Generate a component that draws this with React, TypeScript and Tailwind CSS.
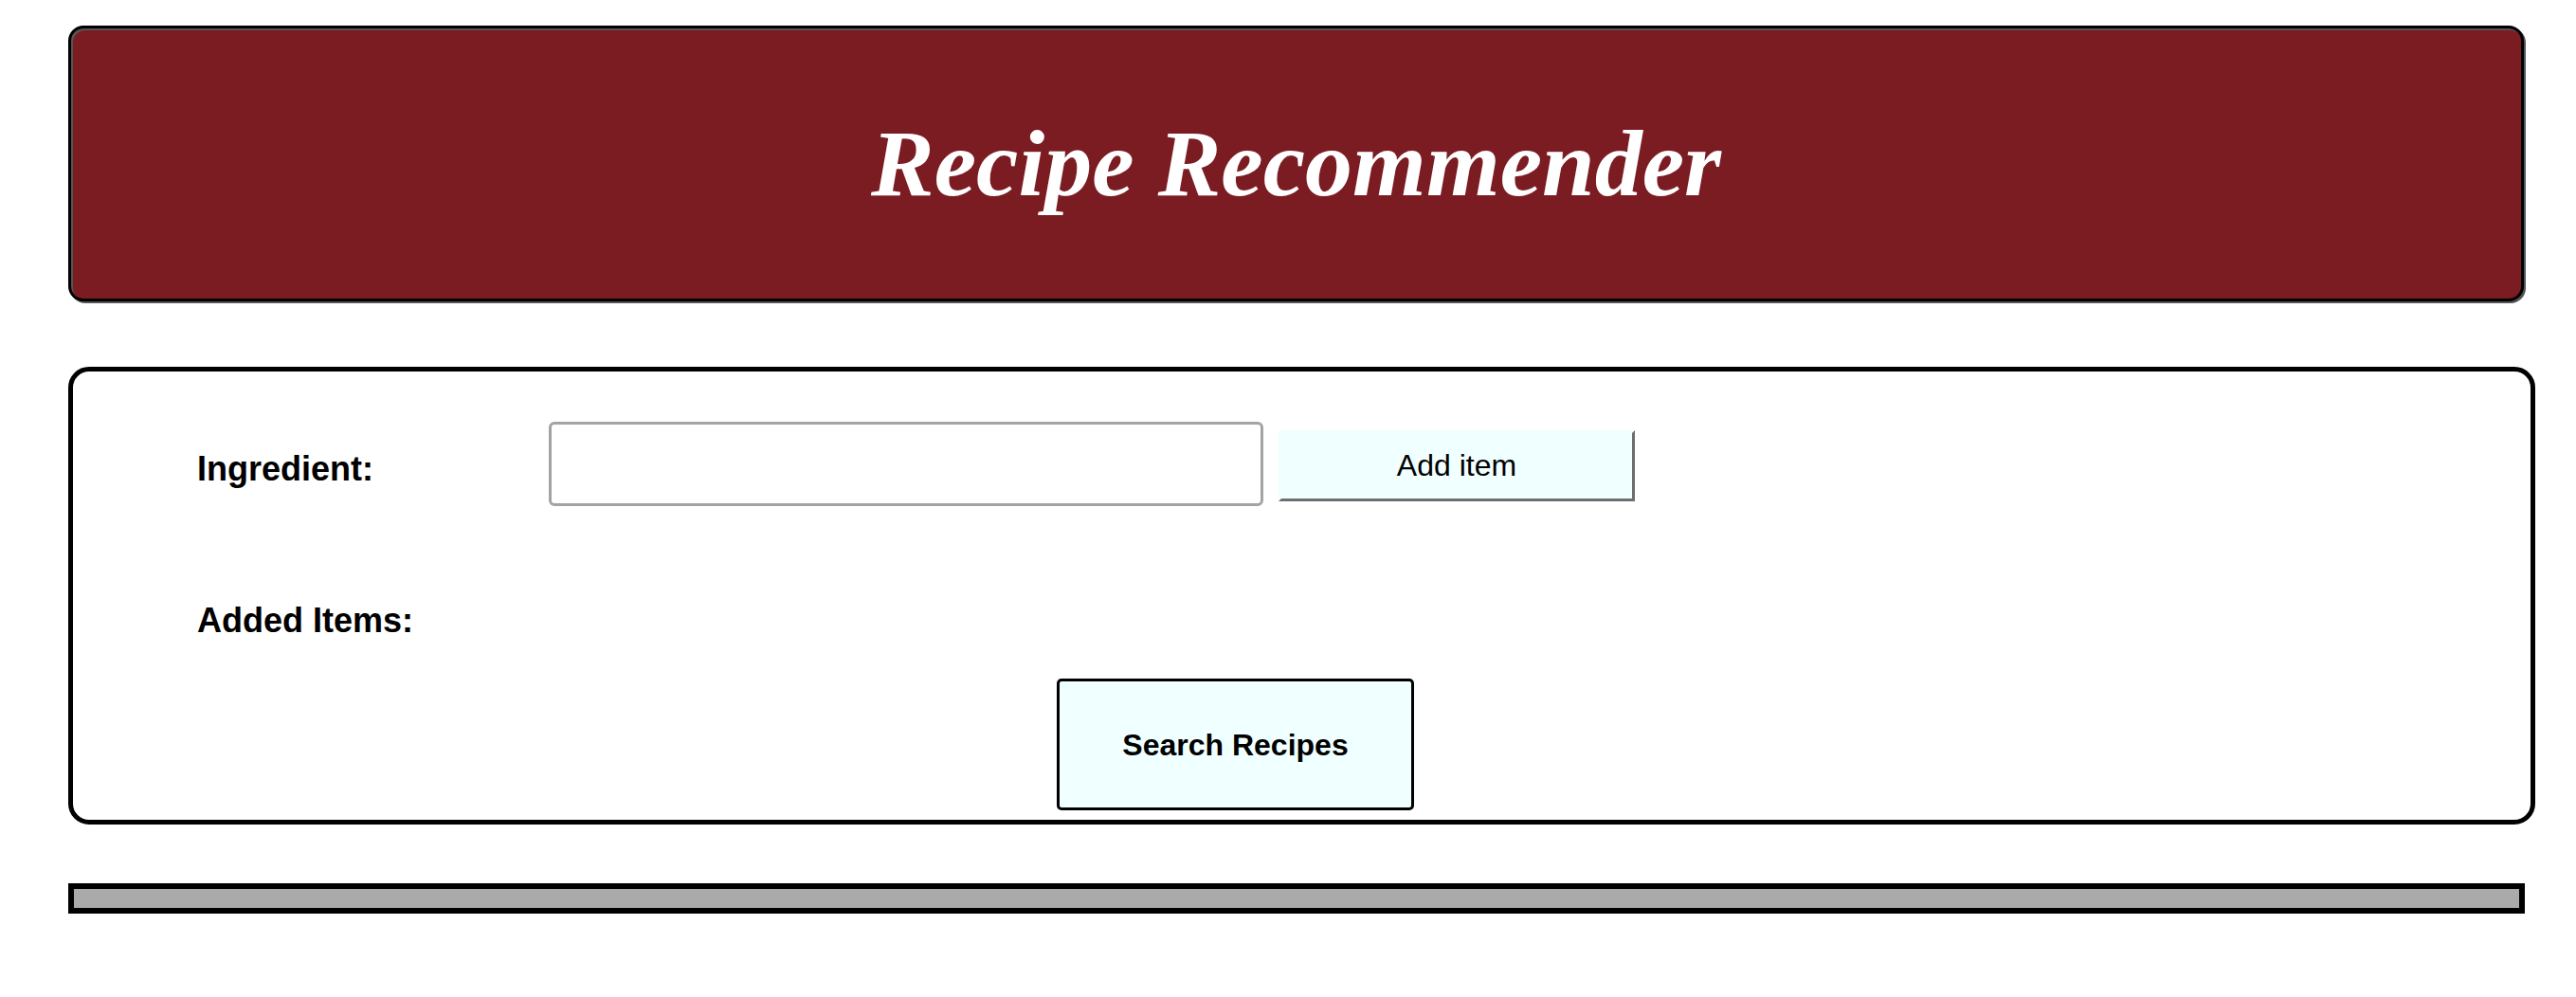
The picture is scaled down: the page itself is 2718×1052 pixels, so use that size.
export default function App() {
  return (
    <div className="min-h-screen bg-white pt-[27px] pl-[72px]" style={{ fontFamily: '"Liberation Sans", Arial, sans-serif' }}>
      <header className="w-[2591px] h-[291px] rounded-[16px] border-[3px] border-black bg-[#7b1c23] shadow-[2px_2px_0_#555,inset_2px_2px_0_#555] flex items-center justify-center">
        <h1 className="text-white italic font-bold text-[100px] leading-none" style={{ fontFamily: '"Liberation Serif", "Times New Roman", serif' }}>
          Recipe Recommender
        </h1>
      </header>

      <section className="mt-[69px] w-[2603px] h-[483px] rounded-[22px] border-[5px] border-black bg-white flex flex-col">
        <div className="flex items-center mt-[53px] ml-[131px]">
          <label className="w-[371px] mt-[10px] text-[36px] font-bold text-black">Ingredient:</label>
          <input type="text" className="w-[754px] h-[89px] rounded-[6px] border-[3px] border-[#a3a3a3] bg-white outline-none" />
          <button className="ml-[16px] mt-[3px] w-[376px] h-[75px] bg-[#f0ffff] border-[3px] border-t-[#f0ffff] border-l-[#f0ffff] border-r-[#6e6e6e] border-b-[#6e6e6e] text-[32px] text-black flex items-center justify-center">
            Add item
          </button>
        </div>
        <div className="ml-[131px] mt-[103px] text-[36px] font-bold text-black leading-none">Added Items:</div>
        <div className="ml-[1038px] mt-[43px]">
          <button className="w-[377px] h-[139px] rounded-[5px] border-[3px] border-black bg-[#f0ffff] text-[32px] font-bold text-black">
            Search Recipes
          </button>
        </div>
      </section>

      <div className="mt-[62px] w-[2592px] h-[32px] border-[6px] border-black bg-[#aaaaaa]" />
    </div>
  );
}
